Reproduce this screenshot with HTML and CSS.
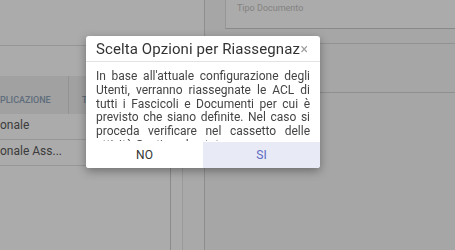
FILE: index.html
```html
<!DOCTYPE html>
<html lang="it">
<head>
    <meta charset="UTF-8">
    <title>Riassegnazione ACL</title>
    <link rel="stylesheet" href="styles.css">
</head>
<body>
<div class="app">
    <div class="list-panel">
        <div class="toolbar"></div>
        <div class="filters"></div>
        <div class="grid-wrap">
            <div class="grid">
                <div class="grid-head">
                    <div class="head-cell col-app">PLICAZIONE</div>
                    <div class="head-cell col-type">TIPO</div>
                </div>
                <div class="grid-row">onale</div>
                <div class="grid-row">onale Ass...</div>
            </div>
            <div class="grid-scroll"></div>
            <div class="grid-gutter"></div>
        </div>
    </div>
    <div class="detail-panel">
        <div class="field"><label>Tipo Documento</label></div>
        <div class="field-row"></div>
        <div class="section"></div>
    </div>
</div>

<div class="overlay"></div>

<div class="dialog">
    <div class="dialog-head">
        <div class="dialog-title">Scelta Opzioni per Riassegnazione ACL</div>
        <span class="dialog-close">&times;</span>
    </div>
    <div class="dialog-body">
        In base all'attuale configurazione degli Utenti, verranno riassegnate le ACL di tutti i Fascicoli e Documenti per cui è previsto che siano definite. Nel caso si proceda verificare nel cassetto delle attività Gestione lo stato.
    </div>
    <div class="dialog-foot">
        <button class="btn btn-no">NO</button>
        <button class="btn btn-yes">SI</button>
    </div>
</div>
</body>
</html>
```

FILE: styles.css
```css
*{
    margin:0;
    padding:0;
    box-sizing: border-box;
}
body{
    width:455px;
    height:250px;
    overflow: hidden;
    background:#fff;
    font-family: Roboto, "Noto Sans", sans-serif;
}

/* pagina sotto */
.app{
    display: flex;
    height:250px;
}
.list-panel{
    width:205px;
    border-right:1px solid #d4d4d4;
    display: flex;
    flex-direction: column;
}
.toolbar{
    height:46px;
    border-bottom:1px solid #e0e0e0;
}
.filters{
    height:30px;
}
.grid-wrap{
    flex:1;
    display: flex;
}
.grid{
    width:170px;
    overflow: hidden;
}
.grid-head{
    display: flex;
    height:38px;
    background:#f0f0f0;
}
.head-cell{
    display: flex;
    align-items: flex-end;
    padding-bottom:9px;
    font-size:9px;
    font-weight:500;
    color:#8ea3ba;
    white-space: nowrap;
}
.col-app{
    width:69px;
    border-right:1px solid #dcdcdc;
}
.col-type{
    padding-left:13px;
}
.grid-row{
    height:26px;
    line-height:23px;
    border-bottom:1px solid #e2e2e2;
    font-size:12px;
    color:#5a5a5a;
    white-space: nowrap;
}
.grid-scroll{
    width:13px;
    border-left:1px solid #d0d0d0;
    border-right:1px solid #e6e6e6;
    background:#fff;
}
.grid-gutter{
    flex:1;
    background:#fcfcfc;
}

.detail-panel{
    flex:1;
    padding-left:20px;
    background:#f8f8f8;
}
.field{
    height:29px;
    background:#fff;
    border-left:1px solid #dedede;
    border-bottom:1px solid #cdcdcd;
    padding:3px 0 0 11px;
    font-size:9px;
    line-height:11px;
}
.field label{
    display: block;
    color:#c4c4c4;
}
.field-row{
    height:15px;
    margin-left:-20px;
    border-bottom:1px solid #dadada;
}
.section{
    height:49px;
    margin-left:-20px;
    border-bottom:1px solid #d6d6d6;
}

/* dialog */
.overlay{
    position: fixed;
    top:0;
    left:0;
    right:0;
    bottom:0;
    background: rgba(0,0,0,.33);
}
.dialog{
    position: absolute;
    left:86px;
    top:36px;
    width:234px;
    background:#fff;
    border-radius:3px;
    box-shadow:0 3px 10px rgba(0,0,0,.35);
    overflow: hidden;
}
.dialog-head{
    display: flex;
    align-items: center;
    height:26px;
    padding:0 12px 0 10px;
    border-bottom:1px solid #e3e3e3;
}
.dialog-title{
    flex:1;
    overflow: hidden;
    white-space: nowrap;
    font-size:15px;
    letter-spacing:.1px;
    color:#333;
}
.dialog-close{
    font-size:14px;
    line-height:14px;
    color:#a0a0a0;
    margin-left:1px;
}
.dialog-body{
    height:79px;
    overflow-y: scroll;
    padding:8px 10px 0;
    font-size:12px;
    line-height:13.8px;
    text-align: justify;
    color:#444;
}
.dialog-body::-webkit-scrollbar{
    width:6px;
}
.dialog-body::-webkit-scrollbar-track{
    background:#e6e6e6;
}
.dialog-body::-webkit-scrollbar-thumb{
    background:#a6a6a6;
}
.dialog-foot{
    display: flex;
    height:26px;
    margin-top:1px;
}
.btn{
    flex:1;
    border:0;
    font-family: Roboto, "Noto Sans", sans-serif;
    font-size:12px;
    font-weight:400;
    cursor: pointer;
}
.btn-no{
    background:#fff;
    color:#333;
}
.btn-yes{
    background:#e8eaf6;
    color:#5c6bc0;
}
```
